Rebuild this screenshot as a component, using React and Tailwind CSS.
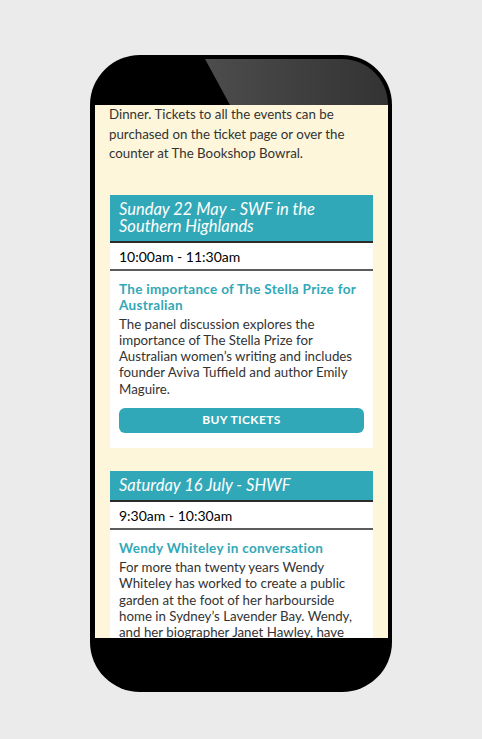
import React from 'react';

const events = [
  {
    date: 'Sunday 22 May - SWF in the Southern Highlands',
    time: '10:00am - 11:30am',
    title: 'The importance of The Stella Prize for Australian',
    body: 'The panel discussion explores the importance of The Stella Prize for Australian women’s writing and includes founder Aviva Tuffield and author Emily Maguire.',
    button: true,
  },
  {
    date: 'Saturday 16 July - SHWF',
    time: '9:30am - 10:30am',
    title: 'Wendy Whiteley in conversation',
    body: 'For more than twenty years Wendy Whiteley has worked to create a public garden at the foot of her harbourside home in Sydney’s Lavender Bay. Wendy, and her biographer Janet Hawley, have discussed the garden and its history.',
    button: false,
  },
];

function EventCard({ event }) {
  return (
    <div className="bg-white mx-[1px]">
      {/* Date header */}
      <div className="bg-[#31a8b7] px-[9px] py-[6px] text-[16.5px] leading-[17px] italic text-white border-b-2 border-[#2b2b2b]">
        {event.date}
      </div>
      {/* Time */}
      <div className="px-[9px] pt-[5px] pb-[4px] text-[14px] leading-[17px] text-black border-b-2 border-[#5c5c5c]">
        {event.time}
      </div>
      {/* Body */}
      <div className="px-[9px] pt-[10px] pb-[15px]">
        <p className="text-[13.5px] leading-[16px] font-bold text-[#31a8b7] tracking-[0.3px]">{event.title}</p>
        <p className="mt-[3px] text-[13.3px] leading-[16.3px] text-[#333]">{event.body}</p>
        {event.button && (
          <button className="mt-[11px] w-full h-[25px] rounded-[6px] bg-[#31a8b7] text-white text-[12px] font-bold tracking-[0.4px]">
            BUY TICKETS
          </button>
        )}
      </div>
    </div>
  );
}

export default function App() {
  return (
    <div className="w-[482px] h-[739px] bg-[#ebebeb] flex justify-center pt-[55px] font-['Lato',sans-serif]">
      <div className="w-[302px] h-[637px] rounded-[50px] bg-black p-[4px] flex flex-col">
        {/* Top bezel with gloss */}
        <div className="relative h-[46px] rounded-t-[46px] overflow-hidden bg-black">
          <div className="absolute inset-0 bg-gradient-to-r from-[#5d5d5d] to-[#333] [clip-path:polygon(111px_0,100%_0,100%_100%,136px_100%)]" />
        </div>
        {/* Screen */}
        <div className="ml-[1px] w-[293px] h-[533px] bg-[#fdf6da] overflow-hidden px-[14px] text-[#333]">
          <p className="text-[13.3px] leading-[19.5px]">
            Dinner. Tickets to all the events can be purchased on the ticket page or over the counter at The Bookshop Bowral.
          </p>
          <div className="mt-[31px] flex flex-col gap-[23px]">
            {events.map((e) => (
              <EventCard key={e.date} event={e} />
            ))}
          </div>
        </div>
      </div>
    </div>
  );
}
